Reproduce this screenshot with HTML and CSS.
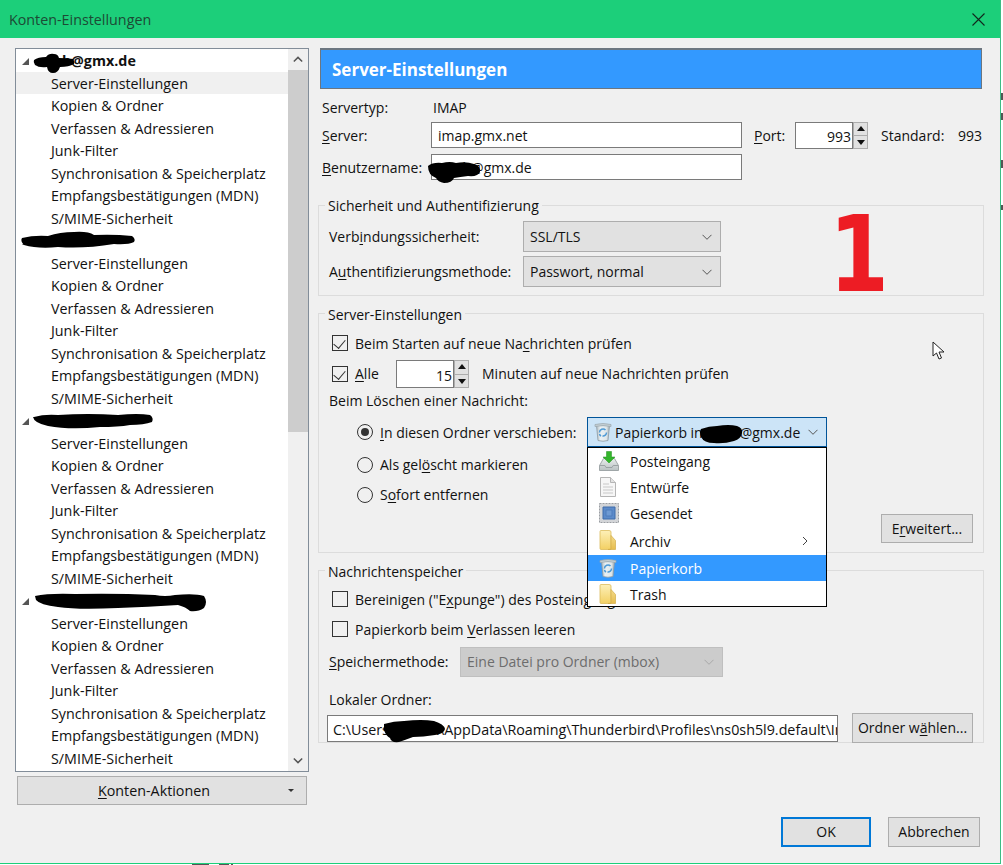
FILE: index.html
```html
<!DOCTYPE html>
<html lang="de">
<head>
<meta charset="utf-8">
<title>Konten-Einstellungen</title>
<link rel="stylesheet" href="styles.css">
</head>
<body>
<svg class="defs" width="0" height="0" aria-hidden="true">
  <defs>
    <linearGradient id="g-folder" x1="0" y1="0" x2="0" y2="1">
      <stop offset="0" stop-color="#fdf0b8"/>
      <stop offset="1" stop-color="#f3d063"/>
    </linearGradient>
    <linearGradient id="g-flap" x1="0" y1="0" x2="0" y2="1">
      <stop offset="0" stop-color="#f4dc8c"/>
      <stop offset="1" stop-color="#e6bd4e"/>
    </linearGradient>
    <linearGradient id="g-trash" x1="0" y1="0" x2="1" y2="0">
      <stop offset="0" stop-color="#aebcc4"/>
      <stop offset=".3" stop-color="#e9f0f3"/>
      <stop offset=".75" stop-color="#dfe8ec"/>
      <stop offset="1" stop-color="#a4b0b6"/>
    </linearGradient>
    <linearGradient id="g-tray" x1="0" y1="0" x2="0" y2="1">
      <stop offset="0" stop-color="#e9eded"/>
      <stop offset="1" stop-color="#b9c1c2"/>
    </linearGradient>
  </defs>
  <symbol id="i-trash" viewBox="0 0 18 20">
    <path d="M2.500 3.500h13L14 18.500q-5 1.500-10 0z" fill="url(#g-trash)" stroke="#8e9ba2" stroke-width=".8"/>
    <path d="M1 2.500Q9 .5 17 2.500V4.500Q9 2.800 1 4.500z" fill="#c5d0d5" stroke="#98a5ab" stroke-width=".7"/>
    <path d="M5.500 10.500a3.500 3.500 0 0 1 6-2.500M12.500 10.500a3.500 3.500 0 0 1-4 3.500M7 14a3.500 3.500 0 0 1-1.500-2" fill="none" stroke="#4d9ad6" stroke-width="1.500"/>
  </symbol>
  <symbol id="i-inbox" viewBox="0 0 20 20">
    <path d="M4.500 7.500h11l4 7v5H.5v-5z" fill="url(#g-tray)" stroke="#8f9799" stroke-width=".8"/>
    <path d="M.8 14.500h5l1.200 2h6l1.200-2h5" fill="none" stroke="#8f9799" stroke-width=".8"/>
    <path d="M7.500 0.500h5v5.500h3.500l-6 6-6-6h3.500z" fill="#34b52c" stroke="#1f8f1c" stroke-width=".5"/>
  </symbol>
  <symbol id="i-draft" viewBox="0 0 18 20">
    <path d="M1.500 .5h10l5 5v14h-15z" fill="#f6f6f6" stroke="#b5b5b5"/>
    <path d="M11.500 .5v5h5" fill="#e2e2e2" stroke="#b5b5b5"/>
    <path d="M4 7h6M4 10h10M4 13h10M4 16h10" stroke="#c8c8c8" fill="none"/>
  </symbol>
  <symbol id="i-sent" viewBox="0 0 20 20">
    <path d="M.5 .5h19v19H.5z" fill="#d3d5d8" stroke="#9a9ea3" stroke-dasharray="2 1"/>
    <path d="M4 4h12v12H4z" fill="#5c8bca" stroke="#3f6cab"/>
    <path d="M7 7h6v6H7z" fill="#6e9ad3" stroke="#4f7cbb"/>
  </symbol>
  <symbol id="i-folder" viewBox="0 0 17 20">
    <path d="M1 1.500Q1 .5 2 .5h8Q12 .5 12 2v17.500H2Q1 19.500 1 18.500z" fill="url(#g-folder)" stroke="#dcbb5c" stroke-width=".8"/>
    <path d="M12 5.500l4.500 5v9H9l3-.5z" fill="url(#g-flap)" stroke="#d3ae4b" stroke-width=".7"/>
  </symbol>
  <symbol id="i-chev" viewBox="0 0 10 6">
    <path d="M.5 .8l4.500 4.500 4.500-4.500" fill="none" stroke="currentColor" stroke-width="1"/>
  </symbol>
</svg>

<div class="window">
  <header class="titlebar">
    <span class="title">Konten-Einstellungen</span>
    <svg class="close" width="13" height="13" viewBox="0 0 13 13"><path d="M.5 .5l12 12M12.500 .5l-12 12" stroke="#12281d" stroke-width="1.100" fill="none"/></svg>
  </header>

  <div class="main">
    <aside class="side">
      <div class="tree">
        <div class="tree-list">
          <div class="acct"><i class="twist"></i><b class="acct-name">b@gmx.de</b></div>
          <div class="node node-sel">Server-Einstellungen</div>
          <div class="node">Kopien &amp; Ordner</div>
          <div class="node">Verfassen &amp; Adressieren</div>
          <div class="node">Junk-Filter</div>
          <div class="node">Synchronisation &amp; Speicherplatz</div>
          <div class="node">Empfangsbestätigungen (MDN)</div>
          <div class="node">S/MIME-Sicherheit</div>
          <div class="acct"><i class="twist"></i></div>
          <div class="node">Server-Einstellungen</div>
          <div class="node">Kopien &amp; Ordner</div>
          <div class="node">Verfassen &amp; Adressieren</div>
          <div class="node">Junk-Filter</div>
          <div class="node">Synchronisation &amp; Speicherplatz</div>
          <div class="node">Empfangsbestätigungen (MDN)</div>
          <div class="node">S/MIME-Sicherheit</div>
          <div class="acct"><i class="twist"></i></div>
          <div class="node">Server-Einstellungen</div>
          <div class="node">Kopien &amp; Ordner</div>
          <div class="node">Verfassen &amp; Adressieren</div>
          <div class="node">Junk-Filter</div>
          <div class="node">Synchronisation &amp; Speicherplatz</div>
          <div class="node">Empfangsbestätigungen (MDN)</div>
          <div class="node">S/MIME-Sicherheit</div>
          <div class="acct"><i class="twist"></i></div>
          <div class="node">Server-Einstellungen</div>
          <div class="node">Kopien &amp; Ordner</div>
          <div class="node">Verfassen &amp; Adressieren</div>
          <div class="node">Junk-Filter</div>
          <div class="node">Synchronisation &amp; Speicherplatz</div>
          <div class="node">Empfangsbestätigungen (MDN)</div>
          <div class="node">S/MIME-Sicherheit</div>
        </div>
        <div class="scrollbar">
          <div class="sb-btn"><svg width="10" height="7" viewBox="0 0 12 8"><path d="M1 6.500l5-5 5 5" fill="none" stroke="#555" stroke-width="1.800"/></svg></div>
          <div class="sb-thumb"></div>
          <div class="sb-track"></div>
          <div class="sb-btn"><svg width="10" height="7" viewBox="0 0 12 8"><path d="M1 1.500l5 5 5-5" fill="none" stroke="#555" stroke-width="1.800"/></svg></div>
        </div>
      </div>
      <button class="btn btn-actions"><span><u>K</u>onten-Aktionen</span><i class="drop-tri"></i></button>
    </aside>

    <section class="panel">
      <h1 class="panel-head">Server-Einstellungen</h1>

      <div class="server-info">
        <div class="line line-type"><span class="lab lab-type">Servertyp:</span><span class="type-val">IMAP</span></div>
        <div class="line line-server">
          <span class="lab"><u>S</u>erver:</span>
          <span class="input input-host">imap.gmx.net</span>
          <span class="port-lab"><u>P</u>ort:</span>
          <span class="spin spin-port"><span class="spin-val">993</span><span class="spin-btns"><i class="up"></i><i class="dn"></i></span></span>
          <span class="std">Standard:</span><span class="std-val">993</span>
        </div>
        <div class="line line-user">
          <span class="lab"><u>B</u>enutzername:</span>
          <span class="input input-host input-user">ih@gmx.de</span>
        </div>
      </div>

      <fieldset class="group group-sec">
        <legend>Sicherheit und Authentifizierung</legend>
        <div class="sec-row">
          <span class="sec-lab">Verb<u>i</u>ndungssicherheit:</span>
          <span class="select"><span>SSL/TLS</span><svg width="10" height="6"><use href="#i-chev"/></svg></span>
        </div>
        <div class="sec-row">
          <span class="sec-lab">A<u>u</u>thentifizierungsmethode:</span>
          <span class="select"><span>Passwort, normal</span><svg width="10" height="6"><use href="#i-chev"/></svg></span>
        </div>
      </fieldset>

      <fieldset class="group group-srv">
        <legend>Server-Einstellungen</legend>
        <div class="chk-row"><i class="chk on"></i><span class="chk-text">Beim Starten auf neue Na<u>c</u>hrichten prüfen</span></div>
        <div class="chk-row chk-row-all">
          <i class="chk on"></i><span class="all"><u>A</u>lle</span>
          <span class="spin spin-min"><span class="spin-val">15</span><span class="spin-btns"><i class="up"></i><i class="dn"></i></span></span>
          <span>Minuten auf neue Nachrichten prüfen</span>
        </div>
        <div class="del-lab">Beim Löschen einer Nachricht:</div>
        <div class="radio-row radio-first">
          <i class="radio on"></i><span class="radio-text"><u>I</u>n diesen Ordner verschieben:</span>
          <span class="folder-select">
            <svg class="ico-sel" width="18" height="20"><use href="#i-trash"/></svg>
            <span class="folder-sel-text">Papierkorb in</span><span class="folder-sel-mail">@gmx.de</span>
            <svg class="chev-sel" width="10" height="6"><use href="#i-chev"/></svg>
          </span>
        </div>
        <div class="radio-row"><i class="radio"></i><span>Als gel<u>ö</u>scht markieren</span></div>
        <div class="radio-row"><i class="radio"></i><span>S<u>o</u>fort entfernen</span></div>
        <div class="adv-row"><button class="btn btn-adv">E<u>r</u>weitert...</button></div>
      </fieldset>

      <fieldset class="group group-store">
        <legend>Nachrichtenspeicher</legend>
        <div class="chk-row chk-plain"><i class="chk"></i><span class="chk-text">Bereinigen ("E<u>x</u>punge") des Posteingangs beim Verlassen</span></div>
        <div class="chk-row chk-plain"><i class="chk"></i><span class="chk-text">Papierkorb beim <u>V</u>erlassen leeren</span></div>
        <div class="store-row">
          <span class="store-lab"><u>S</u>peichermethode:</span>
          <span class="select select-off"><span>Eine Datei pro Ordner (mbox)</span><svg width="10" height="6"><use href="#i-chev"/></svg></span>
        </div>
        <div class="local-lab">Lokaler Ordner:</div>
        <div class="local-row">
          <span class="input input-path">C:\Users\xxxxxx\AppData\Roaming\Thunderbird\Profiles\ns0sh5l9.default\ImapMail</span>
          <button class="btn btn-pick">Ordner w<u>ä</u>hlen...</button>
        </div>
      </fieldset>
    </section>
  </div>

  <footer class="actions">
    <button class="btn btn-ok">OK</button>
    <button class="btn btn-cancel">Abbrechen</button>
  </footer>

  <ul class="menu">
    <li class="menu-item"><svg width="20" height="20"><use href="#i-inbox"/></svg><span>Posteingang</span></li>
    <li class="menu-item"><svg width="18" height="20"><use href="#i-draft"/></svg><span>Entwürfe</span></li>
    <li class="menu-item"><svg width="20" height="20"><use href="#i-sent"/></svg><span>Gesendet</span></li>
    <li class="menu-item menu-tall"><svg width="17" height="20"><use href="#i-folder"/></svg><span>Archiv</span><svg class="menu-sub" width="6" height="10" viewBox="0 0 6 10"><path d="M1 1l4 4-4 4" fill="none" stroke="#444"/></svg></li>
    <li class="menu-item menu-hot"><svg width="18" height="20"><use href="#i-trash"/></svg><span>Papierkorb</span></li>
    <li class="menu-item"><svg width="17" height="20"><use href="#i-folder"/></svg><span>Trash</span></li>
  </ul>

  <div class="big-one">1</div>

  <svg class="pointer" width="14" height="20" viewBox="0 0 14 20"><path d="M1 1v14l3.500-3 2.500 6 2.500-1-2.500-6h5z" fill="#fff" stroke="#222"/></svg>

  <svg class="scribbles" width="1003" height="865" viewBox="0 0 1003 865" aria-hidden="true">
    <path d="M34 60q4-3 12-3q3-4 8-3q4 0 5 4q8 0 14 1q2 3 1 5q-5 3-14 3q-2 6-7 6q-5 0-6-6q-8 1-12-2q-2-3-1-5z"/>
    <path d="M22 238q12-3 26-2q12-4 26-4q14-1 20 3q20-1 38 1q4 3 2 6q-6 3-20 2q-30 5-56 3q-20 2-34-2q-4-4-2-7z"/>
    <path d="M34 417q10-3 24-2q30-2 60 0q20-2 32 0q4 3 2 7q-8 3-22 3q-12 2-30 2q-30 3-52-1q-14-3-15-9z"/>
    <path d="M35 596q14-3 40-2q40-1 80 1q10 2 20 0q20-2 29 1q4 6 0 12q-6 4-14 3q-4-4-12-6q-30 2-60 3q-40 2-60-1q-18-2-22-7z"/>
    <path d="M428 166q5-4 14-3q8-2 14 0q10-2 18 1q7 2 6 8q-2 5-12 4q-8 1-14 2q-2 5-10 5q-6-1-8-5q-8-3-8-12z"/>
    <path d="M701 429q8-3 16-3q12-2 20 0q6 2 5 7q-1 6-8 8q-10 3-20 2q-10 0-13-6q-2-5 0-8z"/>
    <path d="M384 724q10-3 20-3q18-2 30 0q10 3 11 8q-1 5-10 6q-12 2-22 2q-8 3-14 5q-8 1-9-4q-4-2-6-8z"/>
    <path class="crumb" d="M1001 93h2v7h-2zM1001 113h2v7h-2zM1001 160h2v8h-2zM1001 205h2v5h-2zM192 864h17v1h-17zM219 864h10v1h-10zM231 864h2v1h-2z"/>
  </svg>
</div>
</body>
</html>
```
FILE: styles.css
```css
* { box-sizing: border-box; }
html, body { margin: 0; padding: 0; background: #fff; }
body { width: 1003px; height: 865px; overflow: hidden; font: 14.3px/18px "Open Sans", "Liberation Sans", sans-serif; color: #111; }
.defs { position: absolute; }
u { text-underline-offset: 2px; text-decoration-thickness: 1px; }
i { display: block; font-style: normal; }

.window { position: relative; width: 1001px; height: 864px; background: #f0f0f0; border-right: 1px solid #3dbd84; border-bottom: 1px solid #1ccf7a; }
.titlebar { height: 38px; background: #1ccf7a; display: flex; align-items: center; justify-content: space-between; padding: 0 15px 0 9px; color: #1d4a35; }
.title { padding-top: 2px; }
.close { display: block; }

.main { display: flex; padding: 10px 0 0 15px; }
.side { width: 294px; flex: none; }
.tree { display: flex; height: 724px; background: #fff; border: 1px solid #828d99; }
.tree-list { flex: 1; min-width: 0; }
.acct { height: 22.5px; display: flex; align-items: center; }
.twist { width: 0; height: 0; margin: 3px 0 0 6px; border-style: solid; border-width: 0 0 7px 7px; border-color: transparent transparent #555 transparent; }
.acct-name { margin-left: 33px; padding-top: 2px; font-weight: 700; }
.node { height: 22.5px; line-height: 22.5px; padding: 1px 0 0 35px; white-space: nowrap; }
.node-sel { background: #f0f0f0; }

.scrollbar { width: 20px; flex: none; display: flex; flex-direction: column; background: #f0f0f0; }
.sb-btn { height: 21px; flex: none; display: flex; align-items: center; justify-content: center; }
.sb-thumb { height: 362px; flex: none; background: #cdcdcd; }
.sb-track { flex: 1; }

.btn { display: block; margin: 0; padding: 0; background: #e1e1e1; border: 1px solid #adadad; font: inherit; color: #111; }
.btn-actions { position: relative; display: flex; align-items: center; justify-content: center; width: 290px; height: 29px; margin: 4px 0 0 2px; }
.btn-actions span { margin-right: 16px; }
.drop-tri { position: absolute; right: 12px; top: 12px; width: 0; height: 0; border-style: solid; border-width: 3px 3px 0 3px; border-color: #333 transparent transparent transparent; }

.panel { width: 666px; flex: none; margin-left: 9px; font-size: 14px; }
.panel-head { width: 662px; height: 41px; margin: 0 0 0 2px; padding: 0 0 0 11px; background: #3399ff; border: 1px solid #6c7680; border-top-width: 2px; font: 700 17px/40px "Open Sans", sans-serif; color: #fff; }

.server-info { padding: 9px 0 0 4px; height: 106px; }
.line { display: flex; align-items: center; }
.line-type { height: 18px; margin-bottom: 6px; }
.line-server { height: 26px; margin-bottom: 6px; }
.line-user { height: 26px; }
.lab { width: 109px; flex: none; padding-top: 2px; }
.lab-type { width: 111px; }
.type-val, .port-lab, .std, .std-val { padding-top: 2px; }
.input { display: block; height: 26px; background: #fff; border: 1px solid #7a7a7a; padding: 1px 6px 0; line-height: 24px; white-space: nowrap; overflow: hidden; }
.input-host { width: 311px; }
.input-user { padding-left: 27px; }
.port-lab { margin-left: 12px; width: 41px; flex: none; }
.spin { display: flex; background: transparent; }
.spin-val { display: block; height: 100%; background: #fff; border: 1px solid #7a7a7a; text-align: right; padding-right: 1px; }
.spin-btns { display: flex; flex-direction: column; width: 15px; flex: none; }
.spin-btns i { flex: 1; position: relative; background: #e1e1e1; border: 1px solid #adadad; }
.spin-btns .dn { margin-top: -1px; }
.spin-btns i::after { content: ""; position: absolute; left: 3px; width: 0; height: 0; border-style: solid; }
.spin-btns .up::after { top: 3px; border-width: 0 4px 5px 4px; border-color: transparent transparent #111 transparent; }
.spin-btns .dn::after { top: 4px; border-width: 5px 4px 0 4px; border-color: #111 transparent transparent transparent; }
.spin-port { height: 27px; }
.spin-port .spin-val { width: 58px; line-height: 27px; }
.std { margin-left: 13px; width: 77px; flex: none; }

.group { margin: 0; min-width: 0; padding: 0; border: 1px solid #dcdcdc; }
.group legend { padding: 2px 3px 0; line-height: 18px; }
.group-sec { height: 101px; padding: 6px 0 0 10px; margin-bottom: 7px; }
.group-sec legend { margin-left: -4px; }
.sec-row { display: flex; align-items: center; height: 31px; margin-bottom: 4px; }
.sec-lab { width: 194px; flex: none; }
.select { display: flex; align-items: center; justify-content: space-between; width: 198px; height: 31px; padding: 0 8px 0 6px; background: #e1e1e1; border: 1px solid #adadad; color: #111; }
.select svg { color: #555; display: block; }

.group-srv { height: 250px; padding: 10px 0 0 13px; margin-bottom: 7px; }
.group-srv legend, .group-store legend { margin-left: -7px; padding-top: 4px; line-height: 16px; }
.chk-row { display: flex; align-items: center; height: 20px; }
.chk-text { padding-top: 2px; }
.chk { width: 16px; height: 16px; flex: none; border: 1px solid #333; background: transparent; margin-right: 7px; position: relative; }
.chk.on::after { content: ""; position: absolute; left: 3px; top: 1px; width: 6px; height: 10px; border: solid #333; border-width: 0 1px 1px 0; transform: rotate(40deg); }
.chk-row-all { height: 28px; margin-top: 7px; }
.all { width: 41px; flex: none; }
.spin-min { height: 28px; margin-right: 13px; }
.spin-min .spin-val { width: 58px; line-height: 30px; }
.del-lab { margin: 4px 0 0 -3px; height: 18px; }
.radio-row { display: flex; align-items: center; height: 30px; margin-left: 25px; }
.radio-first { margin: 7px 0 3px 25px; }
.radio { position: relative; width: 16px; height: 16px; flex: none; border: 1px solid #333; border-radius: 50%; margin-right: 7px; background: transparent; }
.radio.on::after { content: ""; position: absolute; left: 3px; top: 3px; width: 8px; height: 8px; border-radius: 50%; background: #333; }
.radio-text { width: 207px; flex: none; padding-top: 2px; }
.folder-select { display: flex; align-items: center; width: 240px; height: 30px; background: #cce4f7; border: 1px solid #005499; padding-left: 6px; white-space: nowrap; }
.ico-sel { flex: none; margin-right: 3px; }
.folder-sel-text, .folder-sel-mail { padding-top: 2px; }
.folder-sel-mail { margin-left: 37px; }
.chev-sel { margin-left: 8px; color: #555; flex: none; }
.adv-row { display: flex; justify-content: flex-end; padding-right: 10px; margin-top: 4px; }
.btn-adv { width: 92px; height: 29px; }

.group-store { height: 183px; padding: 10px 0 0 13px; }
.chk-plain { height: 17px; margin-bottom: 13px; }
.store-row { display: flex; align-items: center; margin: -3px 0 0 -3px; height: 30px; }
.store-lab { width: 131px; flex: none; }
.select-off { width: 263px; height: 30px; background: #ccc; border-color: #bfbfbf; color: #6d6d6d; }
.select-off svg { color: #a8a8a8; }
.local-lab { margin: 14px 0 0 -3px; height: 18px; }
.local-row { display: flex; align-items: center; margin: 4px 0 0 -5px; }
.input-path { width: 511px; height: 27px; line-height: 25px; padding: 1px 0 0 5px; flex: none; font-size: 14.3px; }
.btn-pick { width: 121px; height: 30px; margin-left: 14px; }

.actions { position: absolute; left: 781px; top: 817px; display: flex; gap: 17px; font-size: 14px; }
.btn-ok { width: 90px; height: 30px; border: 2px solid #0078d7; }
.btn-cancel { width: 92px; height: 30px; }

.menu { position: absolute; left: 587px; top: 447px; width: 240px; height: 160px; margin: 0; padding: 0; list-style: none; background: #fff; border: 1px solid #000; font-size: 14px; }
.menu-item { position: relative; display: flex; align-items: center; height: 26px; padding-left: 10px; }
.menu-item > svg:first-child { position: absolute; left: 11px; top: 3px; }
.menu-item span { margin-left: 32px; padding-top: 1px; }
.menu-tall { height: 28px; margin-top: 1px; }
.menu-tall > svg:first-child { top: 3px; }
.menu-sub { position: absolute; right: 18px; top: 9px; }
.menu-hot { background: #3399ff; color: #fff; }

.big-one { position: absolute; left: 829px; top: 195px; font: 700 105px/120px "DejaVu Sans", sans-serif; color: #ed1c24; transform: scaleX(.82); transform-origin: left center; }
.pointer { position: absolute; left: 932px; top: 341px; }
.scribbles { position: absolute; left: 0; top: 0; pointer-events: none; fill: #000; }
.crumb { fill: #555; }
```
